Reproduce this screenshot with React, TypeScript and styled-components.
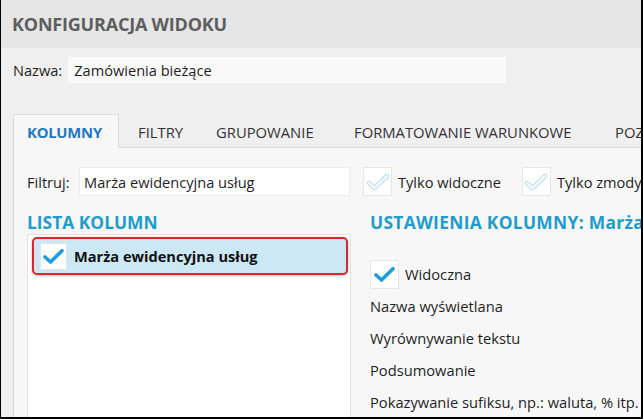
import React from "react";
import styled, { createGlobalStyle } from "styled-components";

const FONT = `"Open Sans", "Noto Sans", "Liberation Sans", sans-serif`;

const Global = createGlobalStyle`
  html, body { margin: 0; padding: 0; background: #ffffff; }
  body { font-family: ${FONT}; }
  * { box-sizing: border-box; }
`;

const Frame = styled.div`
  width: 643px;
  height: 419px;
  overflow: hidden;
  display: flex;
  flex-direction: column;
  background: #efefef;
  border-left: 1px solid #000;
  border-right: 2px solid #000;
  border-bottom: 2px solid #000;
  font-family: ${FONT};
  color: #1f1f1f;
`;

const Header = styled.header`
  height: 48px;
  flex: none;
  display: flex;
  align-items: center;
  padding-left: 11px;
  background: #e6e6e6;
`;

const Title = styled.h1`
  margin: 0;
  font-size: 18px;
  font-weight: 700;
  color: #5e5e5e;
  letter-spacing: -0.2px;
  white-space: nowrap;
`;

const Body = styled.div`
  flex: 1;
  display: flex;
  flex-direction: column;
  padding: 9px 0 0 12px;
  min-height: 0;
`;

const NameRow = styled.div`
  display: flex;
  align-items: center;
  gap: 6px;
  font-size: 14.6px;
  white-space: nowrap;
`;

const NameField = styled.div`
  width: 438px;
  height: 26px;
  display: flex;
  align-items: center;
  padding-left: 6px;
  background: #f9f9f9;
`;

const Tabs = styled.nav`
  margin-top: 30px;
  display: flex;
  align-items: flex-end;
  height: 34px;
  flex: none;
`;

const Tab = styled.div<{ $active?: boolean; $w: number }>`
  width: ${(p) => p.$w}px;
  flex: none;
  height: 34px;
  display: flex;
  align-items: center;
  padding-left: ${(p) => (p.$active ? 13 : 18)}px;
  font-size: 14.8px;
  white-space: nowrap;
  font-weight: ${(p) => (p.$active ? 700 : 400)};
  letter-spacing: ${(p) => (p.$active ? "-0.2px" : "0")};
  color: ${(p) => (p.$active ? "#1f78c4" : "#333")};
  background: ${(p) => (p.$active ? "#f7f7f7" : "transparent")};
  border: ${(p) => (p.$active ? "1px solid #dcdcdc" : "1px solid transparent")};
  border-bottom: none;
  position: relative;
  z-index: 1;
  margin-bottom: -1px;
`;

const Panel = styled.section`
  flex: 1;
  min-height: 0;
  background: #f7f7f7;
  border-left: 1px solid #dcdcdc;
  border-top: 1px solid #dcdcdc;
  padding: 19px 0 0 13px;
  display: flex;
  flex-direction: column;
`;

const FilterRow = styled.div`
  display: flex;
  align-items: center;
  font-size: 14.6px;
  white-space: nowrap;
`;

const FilterLabel = styled.span`
  width: 52px;
  flex: none;
`;

const FilterField = styled.div`
  width: 271px;
  height: 29px;
  flex: none;
  display: flex;
  align-items: center;
  padding-left: 4px;
  background: #fff;
  border: 1px solid #ececec;
  margin-right: 13px;
`;

const CheckBox = styled.span<{ $size: number }>`
  width: ${(p) => p.$size}px;
  height: ${(p) => p.$size}px;
  flex: none;
  display: inline-flex;
  align-items: center;
  justify-content: center;
  background: #fff;
  border: 1px solid #e6e6e6;
`;

const Option = styled.label`
  display: flex;
  align-items: center;
  gap: 6px;
  margin-right: 21px;
`;

const Columns = styled.div`
  margin-top: 14px;
  display: grid;
  grid-template-columns: 324px 1fr;
  column-gap: 19px;
  flex: 1;
  min-height: 0;
`;

const Col = styled.div`
  display: flex;
  flex-direction: column;
  min-height: 0;
  white-space: nowrap;
`;

const Heading = styled.h2<{ $spacing?: number }>`
  margin: 0;
  height: 24px;
  font-size: 17.4px;
  line-height: 24px;
  font-weight: 700;
  color: #1e9ccc;
  letter-spacing: ${(p) => p.$spacing ?? 0}px;
`;

const ListBox = styled.div`
  flex: 1;
  background: #fff;
  border: 1px solid #e2e2e2;
  border-bottom: none;
  padding: 2px 2px 0 4px;
`;

const ListItem = styled.div`
  height: 38px;
  display: flex;
  align-items: center;
  gap: 7px;
  padding-left: 6px;
  background: #cde8f5;
  border: 2px solid #e2232c;
  border-radius: 5px;
  box-shadow: 0 1px 3px rgba(0, 0, 0, 0.25);
  font-size: 14.6px;
  font-weight: 700;
  color: #111;
`;

const SettingsList = styled.div`
  margin-top: 24px;
  display: flex;
  flex-direction: column;
  font-size: 14.7px;
`;

const SettingRow = styled.div`
  height: 32px;
  display: flex;
  align-items: center;
  gap: 6px;
`;

const BoldCheck = () => (
  <svg width="21" height="15" viewBox="0 0 21 15" fill="none">
    <path d="M2 8 L7.5 13 L19 1.8" stroke="#1a9de2" strokeWidth="3.6" strokeLinecap="round" strokeLinejoin="round" />
  </svg>
);

const LightCheck = () => (
  <svg width="24" height="18" viewBox="0 0 24 18" fill="none">
    <path d="M3 10 L8.5 15 L21 3" stroke="#bfe3f5" strokeWidth="4.6" strokeLinecap="round" strokeLinejoin="round" />
    <path d="M3 10 L8.5 15 L21 3" stroke="#ffffff" strokeWidth="2" strokeLinecap="round" strokeLinejoin="round" />
  </svg>
);

export default function App() {
  return (
    <>
      <Global />
      <Frame>
        <Header>
          <Title>KONFIGURACJA WIDOKU</Title>
        </Header>
        <Body>
          <NameRow>
            <span>Nazwa:</span>
            <NameField>Zamówienia bieżące</NameField>
          </NameRow>
          <Tabs>
            <Tab $active $w={106}>KOLUMNY</Tab>
            <Tab $w={78}>FILTRY</Tab>
            <Tab $w={138}>GRUPOWANIE</Tab>
            <Tab $w={261}>FORMATOWANIE WARUNKOWE</Tab>
            <Tab $w={100}>POZYCJA</Tab>
          </Tabs>
          <Panel>
            <FilterRow>
              <FilterLabel>Filtruj:</FilterLabel>
              <FilterField>Marża ewidencyjna usług</FilterField>
              <Option>
                <CheckBox $size={29}>
                  <LightCheck />
                </CheckBox>
                Tylko widoczne
              </Option>
              <Option>
                <CheckBox $size={29}>
                  <LightCheck />
                </CheckBox>
                Tylko zmodyfikowane
              </Option>
            </FilterRow>
            <Columns>
              <Col>
                <Heading>LISTA KOLUMN</Heading>
                <ListBox>
                  <ListItem>
                    <CheckBox $size={27}>
                      <BoldCheck />
                    </CheckBox>
                    Marża ewidencyjna usług
                  </ListItem>
                </ListBox>
              </Col>
              <Col>
                <Heading $spacing={0.3}>USTAWIENIA KOLUMNY: Marża ewidencyjna usług</Heading>
                <SettingsList>
                  <SettingRow>
                    <CheckBox $size={29}>
                      <BoldCheck />
                    </CheckBox>
                    Widoczna
                  </SettingRow>
                  <SettingRow>Nazwa wyświetlana</SettingRow>
                  <SettingRow>Wyrównywanie tekstu</SettingRow>
                  <SettingRow>Podsumowanie</SettingRow>
                  <SettingRow>Pokazywanie sufiksu, np.: waluta, % itp.</SettingRow>
                </SettingsList>
              </Col>
            </Columns>
          </Panel>
        </Body>
      </Frame>
    </>
  );
}
